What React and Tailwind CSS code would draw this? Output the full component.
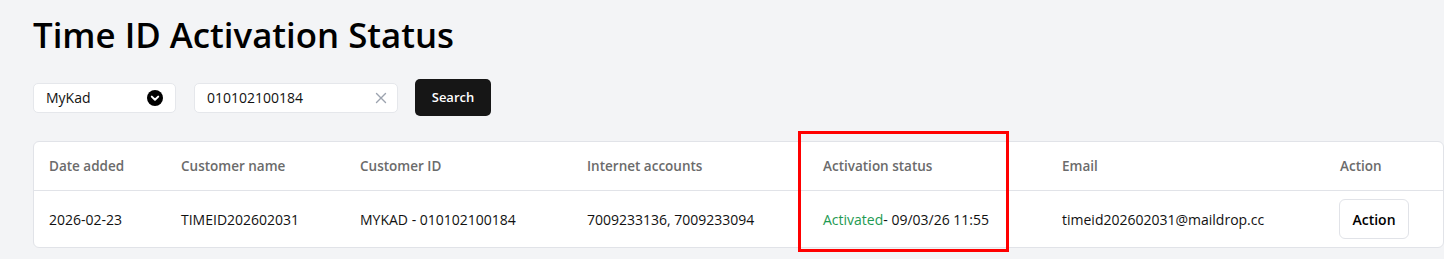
export default function App() {
  const font = { fontFamily: '"Open Sans", "Noto Sans", sans-serif' };
  return (
    <div className="w-[1444px] h-[259px] bg-[#f3f4f6] overflow-hidden" style={font}>
      <div className="pl-[33px] pt-[12px]">
        <h1 className="text-[34.8px] font-semibold text-black leading-[46px]">Time ID Activation Status</h1>
        <div className="flex items-center mt-[21px] h-[37px]">
          <div className="w-[143px] h-[30px] bg-white rounded-[5px] border border-[#e5e7eb] flex items-center justify-between pl-[12px] pr-[12px]">
            <span className="text-[14px] text-[#111]">MyKad</span>
            <svg width="16" height="16" viewBox="0 0 16 16">
              <circle cx="8" cy="8" r="8" fill="#000" />
              <path d="M4.8 6.6 L8 9.8 L11.2 6.6" stroke="#fff" strokeWidth="2" fill="none" strokeLinecap="round" strokeLinejoin="round" />
            </svg>
          </div>
          <div className="ml-[18px] w-[204px] h-[30px] bg-white rounded-[5px] border border-[#e5e7eb] flex items-center justify-between pl-[12px] pr-[10px]">
            <span className="text-[14px] text-[#111]">010102100184</span>
            <svg width="12" height="12" viewBox="0 0 12 12">
              <path d="M1.5 1.5 L10.5 10.5 M10.5 1.5 L1.5 10.5" stroke="#9ca3af" strokeWidth="1.4" strokeLinecap="round" />
            </svg>
          </div>
          <button className="ml-[17px] w-[76px] h-[37px] bg-[#161616] rounded-[5px] text-white text-[13px] font-semibold">Search</button>
        </div>
        <div className="relative mt-[25px] w-[1411px] h-[107px] bg-white border border-[#e1e3e8] rounded-[6px]">
          <div className="flex items-center h-[49px] border-b border-[#e1e3e8] text-[13.5px] text-[#6b6b6b] font-semibold">
            <div className="w-[147px] pl-[15px]">Date added</div>
            <div className="w-[179px]">Customer name</div>
            <div className="w-[227px]">Customer ID</div>
            <div className="w-[236px]">Internet accounts</div>
            <div className="w-[239px]">Activation status</div>
            <div className="w-[278px]">Email</div>
            <div>Action</div>
          </div>
          <div className="flex items-center h-[56px] text-[14px] text-[#111]">
            <div className="w-[147px] pl-[15px]">2026-02-23</div>
            <div className="w-[179px]">TIMEID202602031</div>
            <div className="w-[227px]">MYKAD - 010102100184</div>
            <div className="w-[236px]">7009233136, 7009233094</div>
            <div className="w-[239px]"><span className="text-[#1e9a52]">Activated</span>- 09/03/26 11:55</div>
            <div className="w-[277px]">timeid202602031@maildrop.cc</div>
            <button className="w-[70px] h-[40px] bg-white border border-[#e1e3e8] rounded-[6px] text-[14px] font-semibold text-black">Action</button>
          </div>
          <div className="absolute left-[764px] top-[-11px] w-[211px] h-[121px] border-[3px] border-[#ff0000]"></div>
        </div>
      </div>
    </div>
  );
}
